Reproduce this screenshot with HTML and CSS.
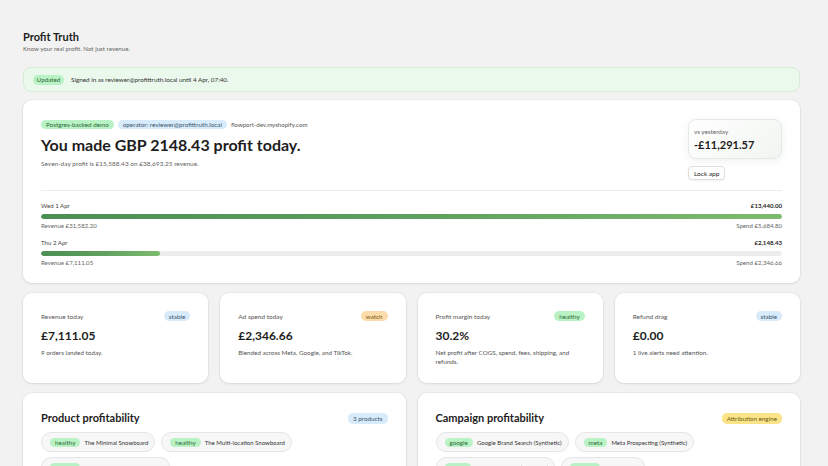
FILE: index.html
```html
<!DOCTYPE html>
<html lang="en">
<head>
<meta charset="utf-8">
<title>Profit Truth</title>
<link rel="stylesheet" href="styles.css">
</head>
<body>
<div class="page">
  <header class="head">
    <h1 class="title">Profit Truth</h1>
    <p class="subtitle">Know your real profit. Not just revenue.</p>
  </header>

  <div class="banner">
    <span class="pill pill-green">Updated</span>
    <span class="banner-text">Signed in as reviewer@profittruth.local until 4 Apr, 07:40.</span>
  </div>

  <section class="card hero">
    <div class="hero-top">
      <div class="hero-left">
        <div class="tags">
          <span class="pill pill-green">Postgres-backed demo</span>
          <span class="pill pill-blue">operator: reviewer@profittruth.local</span>
          <span class="shop">flowport-dev.myshopify.com</span>
        </div>
        <h2 class="headline">You made GBP 2148.43 profit today.</h2>
        <p class="hero-sub">Seven-day profit is £15,588.43 on £38,693.25 revenue.</p>
      </div>
      <div class="hero-right">
        <div class="delta">
          <span class="delta-label">vs yesterday</span>
          <span class="delta-value">-£11,291.57</span>
        </div>
        <button class="lock">Lock app</button>
      </div>
    </div>
    <div class="divider"></div>
    <div class="days">
      <div class="day">
        <div class="day-row"><span>Wed 1 Apr</span><span class="day-profit">£13,440.00</span></div>
        <div class="track"><div class="fill" style="width:100%"></div></div>
        <div class="day-row muted"><span>Revenue £31,582.20</span><span>Spend £5,684.80</span></div>
      </div>
      <div class="day">
        <div class="day-row"><span>Thu 2 Apr</span><span class="day-profit">£2,148.43</span></div>
        <div class="track"><div class="fill" style="width:16%"></div></div>
        <div class="day-row muted"><span>Revenue £7,111.05</span><span>Spend £2,346.66</span></div>
      </div>
    </div>
  </section>

  <section class="stats">
    <div class="card stat">
      <div class="stat-head"><span>Revenue today</span><span class="pill pill-blue">stable</span></div>
      <div class="stat-value">£7,111.05</div>
      <p class="stat-desc">9 orders landed today.</p>
    </div>
    <div class="card stat">
      <div class="stat-head"><span>Ad spend today</span><span class="pill pill-orange">watch</span></div>
      <div class="stat-value">£2,346.66</div>
      <p class="stat-desc">Blended across Meta, Google, and TikTok.</p>
    </div>
    <div class="card stat">
      <div class="stat-head"><span>Profit margin today</span><span class="pill pill-green">healthy</span></div>
      <div class="stat-value">30.2%</div>
      <p class="stat-desc">Net profit after COGS, spend, fees, shipping, and refunds.</p>
    </div>
    <div class="card stat">
      <div class="stat-head"><span>Refund drag</span><span class="pill pill-blue">stable</span></div>
      <div class="stat-value">£0.00</div>
      <p class="stat-desc">1 live alerts need attention.</p>
    </div>
  </section>

  <section class="panels">
    <div class="card panel">
      <div class="panel-head">
        <h3 class="panel-title">Product profitability</h3>
        <span class="pill pill-blue">3 products</span>
      </div>
      <div class="chips">
        <span class="chip"><span class="pill pill-green">healthy</span>The Minimal Snowboard</span>
        <span class="chip"><span class="pill pill-green">healthy</span>The Multi-location Snowboard</span>
        <span class="chip"><span class="pill pill-green">healthy</span>The Videographer Snowboard</span>
      </div>
    </div>
    <div class="card panel">
      <div class="panel-head">
        <h3 class="panel-title">Campaign profitability</h3>
        <span class="pill pill-yellow">Attribution engine</span>
      </div>
      <div class="chips">
        <span class="chip"><span class="pill pill-green">google</span>Google Brand Search (Synthetic)</span>
        <span class="chip"><span class="pill pill-green">meta</span>Meta Prospecting (Synthetic)</span>
        <span class="chip"><span class="pill pill-green">tiktok</span>TikTok Spark Ads (Synthetic)</span>
        <span class="chip"><span class="pill pill-green">klaviyo</span>Klaviyo Email</span>
      </div>
    </div>
  </section>
</div>
</body>
</html>
```

FILE: styles.css
```css
* { box-sizing: border-box; }

html, body {
  margin: 0;
  padding: 0;
  background: #f2f2f2;
  color: #1d1d1d;
  font-family: Lato, "Open Sans", sans-serif;
}

.page {
  padding: 30px 28px 0 23px;
}

.title {
  margin: 0;
  font-size: 11px;
  line-height: 14px;
  font-weight: 700;
}

.subtitle {
  margin: 1px 0 0;
  font-size: 6.2px;
  line-height: 8px;
  color: #666;
}

.banner {
  margin-top: 14px;
  height: 25px;
  display: flex;
  align-items: center;
  gap: 7px;
  padding: 0 9px;
  background: #ebf8ec;
  border: 1px solid #d4ecd6;
  border-radius: 8px;
}

.banner-text {
  font-size: 6.3px;
  color: #333;
}

.pill {
  display: inline-flex;
  align-items: center;
  height: 9px;
  padding: 0 5px;
  border-radius: 5px;
  font-size: 6.3px;
  line-height: 9px;
  white-space: nowrap;
}

.banner .pill { height: 10px; width: 31px; justify-content: center; padding: 0; font-size: 6.3px; }

.pill-green { background: #b9f2c4; color: #2d6a38; }
.pill-blue { background: #d8ebfa; color: #3b566f; }
.pill-orange { background: #fcdcaa; color: #7a5710; }
.pill-yellow { background: #fbe487; color: #6b5a12; }

.card {
  background: #fff;
  border-radius: 9px;
  box-shadow: 0 1px 3px rgba(0, 0, 0, 0.08), 0 0 0 1px rgba(0, 0, 0, 0.03);
}

.hero {
  margin-top: 8px;
  padding: 19px 18px 16px;
}

.hero-top {
  display: flex;
  justify-content: space-between;
  align-items: flex-start;
}

.tags {
  display: flex;
  align-items: center;
  gap: 4px;
  height: 10px;
}

.shop {
  font-size: 6.1px;
  color: #555;
}

.headline {
  margin: 6px 0 0;
  font-size: 16px;
  line-height: 20px;
  font-weight: 700;
}

.hero-sub {
  margin: 5px 0 0;
  font-size: 6.5px;
  line-height: 8px;
  color: #666;
}

.hero-right {
  display: flex;
  flex-direction: column;
  align-items: flex-start;
}

.delta {
  width: 94px;
  height: 40px;
  padding: 0 5px;
  display: flex;
  flex-direction: column;
  justify-content: center;
  gap: 2px;
  border: 1px solid #e3e9e4;
  border-radius: 8px;
  background: linear-gradient(135deg, #ffffff 0%, #f1f5f1 100%);
  box-shadow: 0 2px 8px rgba(0, 0, 0, 0.06);
}

.delta-label {
  font-size: 6.3px;
  line-height: 8px;
  color: #666;
}

.delta-value {
  font-size: 11px;
  line-height: 13px;
  font-weight: 700;
}

.lock {
  margin-top: 7px;
  height: 14px;
  padding: 0 5px;
  border: 1px solid #dedede;
  border-radius: 4px;
  background: #fff;
  font-family: inherit;
  font-size: 6.5px;
  color: #222;
  box-shadow: 0 1px 2px rgba(0, 0, 0, 0.06);
}

.divider {
  margin-top: 10px;
  height: 1px;
  background: #ececec;
}

.days {
  margin-top: 11px;
}

.day + .day {
  margin-top: 9px;
}

.day-row {
  display: flex;
  justify-content: space-between;
  font-size: 6.1px;
  line-height: 8px;
  color: #444;
}

.day-row.muted {
  margin-top: 3px;
  color: #666;
}

.day-profit {
  font-weight: 700;
  color: #222;
}

.track {
  margin-top: 4px;
  height: 5px;
  border-radius: 3px;
  background: #ededed;
  overflow: hidden;
}

.fill {
  height: 100%;
  border-radius: 3px;
  background: linear-gradient(90deg, #4b8f52 0%, #5f9f5f 50%, #7dbb6f 100%);
}

.stats {
  margin-top: 10px;
  display: grid;
  grid-template-columns: repeat(4, 1fr);
  gap: 12px;
}

.stat {
  padding: 18px 18px 17px;
}

.stat-head {
  display: flex;
  justify-content: space-between;
  align-items: center;
  height: 10px;
  font-size: 6.5px;
  color: #555;
}

.stat-head .pill { height: 10px; padding: 0 5px; }

.stat-value {
  margin-top: 6px;
  font-size: 12px;
  line-height: 18px;
  font-weight: 700;
}

.stat-desc {
  margin: 3px 0 0;
  font-size: 6.3px;
  line-height: 9px;
  color: #555;
}

.panels {
  margin-top: 10px;
  display: grid;
  grid-template-columns: 1fr 1fr;
  gap: 12px;
}

.panel {
  padding: 17px 18px 18px;
}

.panel-head {
  display: flex;
  justify-content: space-between;
  align-items: center;
  height: 16px;
}

.panel-title {
  margin: 0;
  font-size: 11px;
  line-height: 16px;
  font-weight: 700;
}

.panel-head .pill { height: 11px; padding: 0 5px; }

.chips {
  margin-top: 6px;
  display: flex;
  flex-wrap: wrap;
  gap: 5px 6px;
}

.chip {
  display: inline-flex;
  align-items: center;
  gap: 4px;
  height: 20px;
  padding: 0 6px 0 8px;
  border: 1px solid #e5e5e5;
  border-radius: 10px;
  background: #f7f7f7;
  font-size: 6px;
  color: #333;
}
```
